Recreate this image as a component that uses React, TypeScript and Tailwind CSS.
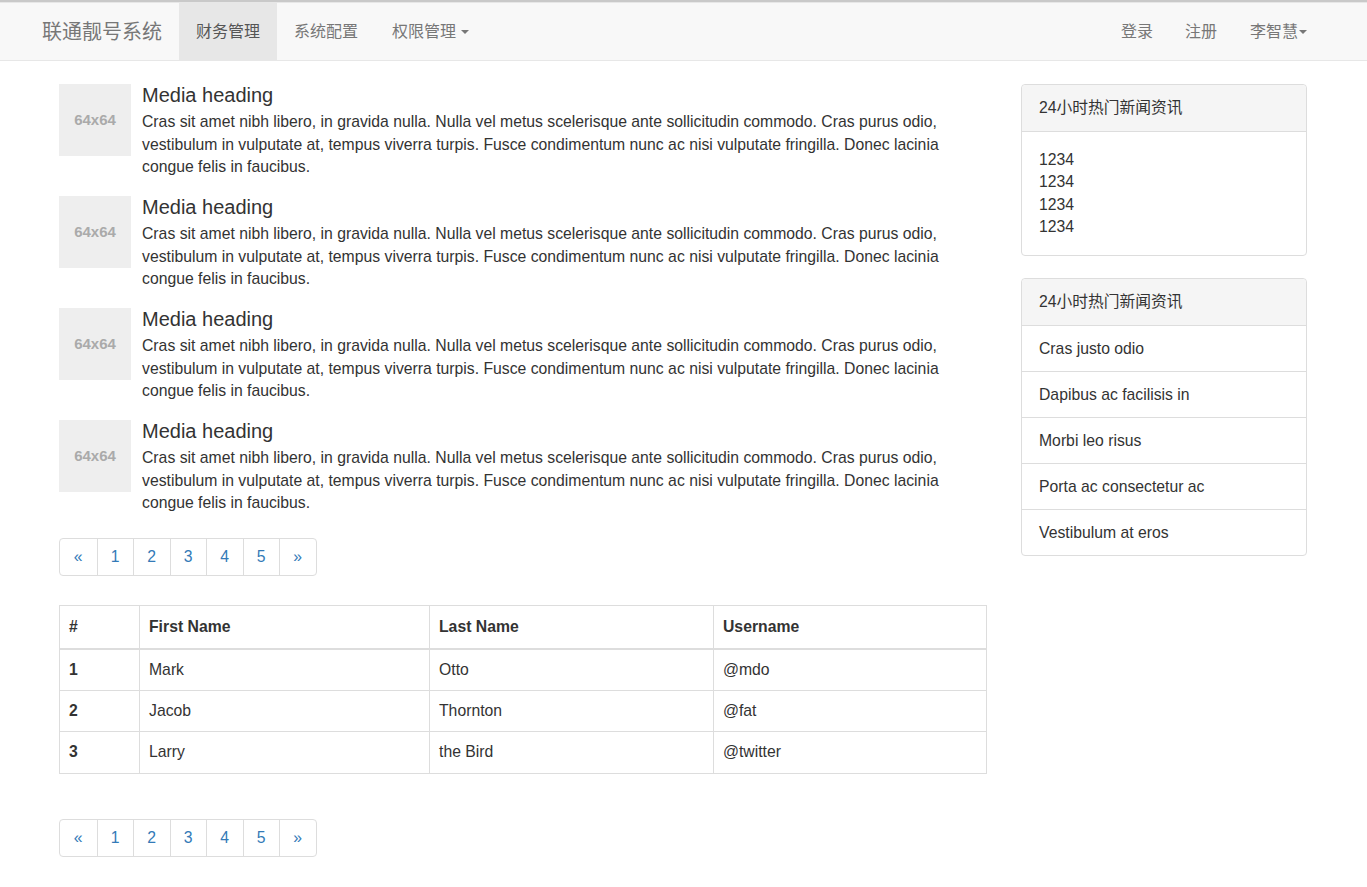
import React from "react";

const lorem =
  "Cras sit amet nibh libero, in gravida nulla. Nulla vel metus scelerisque ante sollicitudin commodo. Cras purus odio, vestibulum in vulputate at, tempus viverra turpis. Fusce condimentum nunc ac nisi vulputate fringilla. Donec lacinia congue felis in faucibus.";

const users = [
  { id: 1, first: "Mark", last: "Otto", user: "@mdo" },
  { id: 2, first: "Jacob", last: "Thornton", user: "@fat" },
  { id: 3, first: "Larry", last: "the Bird", user: "@twitter" },
];

const listItems = [
  "Cras justo odio",
  "Dapibus ac facilisis in",
  "Morbi leo risus",
  "Porta ac consectetur ac",
  "Vestibulum at eros",
];

const Caret = () => (
  <span className="ml-[5px] inline-block h-0 w-0 border-x-[4px] border-t-[4px] border-x-transparent border-t-[#777] align-middle" />
);

const Pagination = () => (
  <ul className="flex h-[38px] w-fit rounded-[4px] border border-[#ddd] text-[15.75px] text-[#337ab7]">
    {["«", "1", "2", "3", "4", "5", "»"].map((p, i) => (
      <li
        key={i}
        className={
          "flex w-[36.5px] items-center justify-center " +
          (i > 0 ? "border-l border-[#ddd]" : "")
        }
      >
        {p}
      </li>
    ))}
  </ul>
);

const MediaItem = () => (
  <div className="flex">
    <div className="flex h-[72px] w-[72px] shrink-0 items-center justify-center bg-[#eee] text-[15px] font-bold text-[#aaa]">
      64x64
    </div>
    <div className="pl-[11px]">
      <h4 className="text-[20px] leading-[22px] text-[#333]">Media heading</h4>
      <p className="mt-[5px] text-[15.75px] leading-[22.5px] text-[#333]">
        {lorem}
      </p>
    </div>
  </div>
);

const Navbar = () => (
  <div className="border-t-2 border-t-[#c9c9c9]">
    <nav className="flex h-[59px] items-stretch border-y border-[#e7e7e7] bg-[#f8f8f8] pl-[25px] pr-[45px] text-[16px] text-[#777]">
      <div className="flex items-center px-[17px] text-[20px]">
        联通靓号系统
      </div>
      <ul className="flex">
        <li className="flex items-center bg-[#e7e7e7] px-[17px] text-[#555]">
          财务管理
        </li>
        <li className="flex items-center px-[17px]">系统配置</li>
        <li className="flex items-center px-[17px]">
          权限管理 <Caret />
        </li>
      </ul>
      <ul className="ml-auto flex">
        <li className="flex items-center px-[16px]">登录</li>
        <li className="flex items-center px-[16px]">注册</li>
        <li className="flex items-center pl-[17px] pr-[15px]">
          李智慧
          <span className="ml-[1px] inline-block h-0 w-0 border-x-[4px] border-t-[4px] border-x-transparent border-t-[#777]" />
        </li>
      </ul>
    </nav>
  </div>
);

export default function App() {
  return (
    <div
      className="min-h-screen bg-white text-[#333]"
      style={{ fontFamily: '"Liberation Sans", "Noto Sans CJK SC", sans-serif' }}
    >
      <Navbar />
      <div className="flex gap-[34px] pl-[59px] pt-[23px]">
        <main className="w-[928px]">
          <div className="flex flex-col gap-[17.5px]">
            {[0, 1, 2, 3].map((i) => (
              <MediaItem key={i} />
            ))}
          </div>
          <div className="mt-[23.5px]">
            <Pagination />
          </div>
          <table className="mt-[29px] w-full border-collapse border border-[#ddd] text-[15.75px] text-[#333]">
            <thead>
              <tr className="h-[43px] border-b-2 border-[#ddd] text-left">
                <th className="w-[80px] border border-b-2 border-[#ddd] px-[9px] font-bold">#</th>
                <th className="w-[290px] border border-b-2 border-[#ddd] px-[9px] font-bold">First Name</th>
                <th className="w-[284px] border border-b-2 border-[#ddd] px-[9px] font-bold">Last Name</th>
                <th className="border border-b-2 border-[#ddd] px-[9px] font-bold">Username</th>
              </tr>
            </thead>
            <tbody>
              {users.map((u) => (
                <tr key={u.id} className="h-[41.5px]">
                  <td className="border border-[#ddd] px-[9px] font-bold">{u.id}</td>
                  <td className="border border-[#ddd] px-[9px]">{u.first}</td>
                  <td className="border border-[#ddd] px-[9px]">{u.last}</td>
                  <td className="border border-[#ddd] px-[9px]">{u.user}</td>
                </tr>
              ))}
            </tbody>
          </table>
          <div className="mt-[45px] pb-[30px]">
            <Pagination />
          </div>
        </main>

        <aside className="flex w-[286px] flex-col gap-[22px] text-[15.75px]">
          <div className="rounded-[4px] border border-[#ddd]">
            <div className="flex h-[47px] items-center rounded-t-[4px] border-b border-[#ddd] bg-[#f5f5f5] px-[17px]">
              24小时热门新闻资讯
            </div>
            <div className="px-[17px] py-[16.5px] leading-[22.5px]">
              <div>1234</div>
              <div>1234</div>
              <div>1234</div>
              <div>1234</div>
            </div>
          </div>

          <div className="rounded-[4px] border border-[#ddd]">
            <div className="flex h-[47px] items-center rounded-t-[4px] border-b border-[#ddd] bg-[#f5f5f5] px-[17px]">
              24小时热门新闻资讯
            </div>
            <ul>
              {listItems.map((item, i) => (
                <li
                  key={i}
                  className={
                    "flex items-center px-[17px] " +
                    (i > 0 ? "h-[46px] border-t border-[#ddd]" : "h-[45px]")
                  }
                >
                  {item}
                </li>
              ))}
            </ul>
          </div>
        </aside>
      </div>
    </div>
  );
}
